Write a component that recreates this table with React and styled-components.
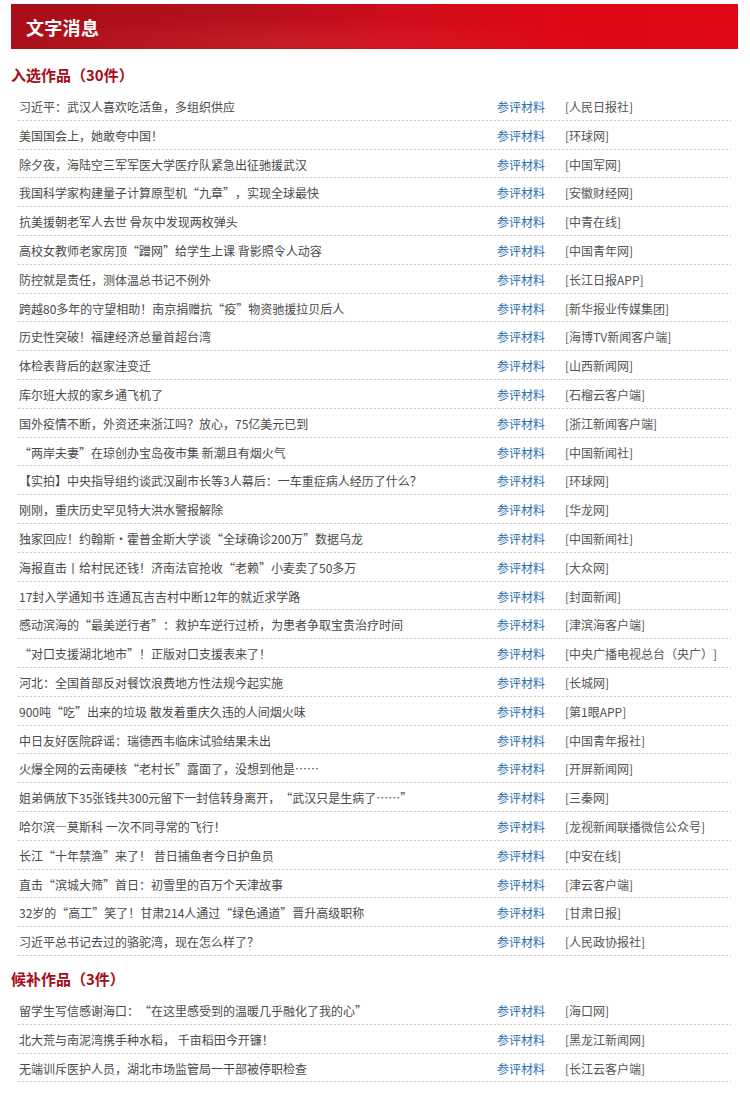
import React from "react"
import styled, { createGlobalStyle } from "styled-components"

const selected = [
  ["习近平：武汉人喜欢吃活鱼，多组织供应", "人民日报社"],
  ["美国国会上，她敢夸中国！", "环球网"],
  ["除夕夜，海陆空三军军医大学医疗队紧急出征驰援武汉", "中国军网"],
  ["我国科学家构建量子计算原型机“九章”，实现全球最快", "安徽财经网"],
  ["抗美援朝老军人去世 骨灰中发现两枚弹头", "中青在线"],
  ["高校女教师老家房顶“蹭网”给学生上课 背影照令人动容", "中国青年网"],
  ["防控就是责任，测体温总书记不例外", "长江日报APP"],
  ["跨越80多年的守望相助！南京捐赠抗“疫”物资驰援拉贝后人", "新华报业传媒集团"],
  ["历史性突破！福建经济总量首超台湾", "海博TV新闻客户端"],
  ["体检表背后的赵家洼变迁", "山西新闻网"],
  ["库尔班大叔的家乡通飞机了", "石榴云客户端"],
  ["国外疫情不断，外资还来浙江吗？放心，75亿美元已到", "浙江新闻客户端"],
  ["“两岸夫妻”在琼创办宝岛夜市集 新潮且有烟火气", "中国新闻社"],
  ["【实拍】中央指导组约谈武汉副市长等3人幕后：一车重症病人经历了什么？", "环球网"],
  ["刚刚，重庆历史罕见特大洪水警报解除", "华龙网"],
  ["独家回应！约翰斯·霍普金斯大学谈“全球确诊200万”数据乌龙", "中国新闻社"],
  ["海报直击丨给村民还钱！济南法官抢收“老赖”小麦卖了50多万", "大众网"],
  ["17封入学通知书 连通瓦吉吉村中断12年的就近求学路", "封面新闻"],
  ["感动滨海的“最美逆行者”：救护车逆行过桥，为患者争取宝贵治疗时间", "津滨海客户端"],
  ["“对口支援湖北地市”！正版对口支援表来了！", "中央广播电视总台（央广）"],
  ["河北：全国首部反对餐饮浪费地方性法规今起实施", "长城网"],
  ["900吨“吃”出来的垃圾 散发着重庆久违的人间烟火味", "第1眼APP"],
  ["中日友好医院辟谣：瑞德西韦临床试验结果未出", "中国青年报社"],
  ["火爆全网的云南硬核“老村长”露面了，没想到他是……", "开屏新闻网"],
  ["姐弟俩放下35张钱共300元留下一封信转身离开，“武汉只是生病了……”", "三秦网"],
  ["哈尔滨—莫斯科 一次不同寻常的飞行！", "龙视新闻联播微信公众号"],
  ["长江“十年禁渔”来了！ 昔日捕鱼者今日护鱼员", "中安在线"],
  ["直击“滨城大筛”首日：初雪里的百万个天津故事", "津云客户端"],
  ["32岁的“高工”笑了！甘肃214人通过“绿色通道”晋升高级职称", "甘肃日报"],
  ["习近平总书记去过的骆驼湾，现在怎么样了？", "人民政协报社"],
]

const alternates = [
  ["留学生写信感谢海口：“在这里感受到的温暖几乎融化了我的心”", "海口网"],
  ["北大荒与南泥湾携手种水稻， 千亩稻田今开镰！", "黑龙江新闻网"],
  ["无端训斥医护人员，湖北市场监管局一干部被停职检查", "长江云客户端"],
]

const GlobalStyle = createGlobalStyle`
  html, body {
    margin: 0;
    padding: 0;
    background: #fff;
  }
  body {
    font-family: "Noto Sans CJK SC", "Liberation Sans", sans-serif;
    text-spacing-trim: space-all;
  }
`

const Page = styled.div`
  width: 750px;
  padding: 4px 12px 0 11px;
  box-sizing: border-box;
`

const Banner = styled.div`
  height: 45px;
  display: flex;
  align-items: center;
  padding-left: 15px;
  background:
    radial-gradient(ellipse 60% 80% at 38% 85%, rgba(255, 90, 90, 0.18), transparent 70%),
    linear-gradient(90deg, #a90e18 0%, #b3101b 30%, #d00c1a 55%, #de0716 75%, #e00615 100%);
  color: #fff;
  font-size: 18px;
  font-weight: 700;
  letter-spacing: 0.3px;
`

const Section = styled.section`
  margin-top: ${p => p.gap}px;
`

const Heading = styled.h2`
  margin: 0 0 6px;
  font-size: 15px;
  line-height: 22px;
  font-weight: 700;
  color: #a50c16;
`

const List = styled.ul`
  list-style: none;
  margin: 0 0 0 7px;
  padding: 0;
  width: 713px;
`

const Row = styled.li`
  display: grid;
  grid-template-columns: 478px 68px 1fr;
  height: 28.8px;
  box-sizing: border-box;
  padding: 6px 0 0 1px;
  background: repeating-linear-gradient(90deg, #c9c9c9 0 2px, transparent 2px 4px) left bottom / 100% 1px no-repeat;
  font-size: 12px;
  line-height: 18px;
  white-space: nowrap;
`

const Title = styled.span`
  color: #4a4a4a;
  overflow: hidden;
`

const Material = styled.a`
  color: #2b6db3;
  text-decoration: none;
  cursor: pointer;
`

const Source = styled.span`
  color: #555;
`

function Group({ title, items, gap }) {
  return (
    <Section gap={gap}>
      <Heading>{title}</Heading>
      <List>
        {items.map(([t, s]) => (
          <Row key={t}>
            <Title>{t}</Title>
            <Material>参评材料</Material>
            <Source>[{s}]</Source>
          </Row>
        ))}
      </List>
    </Section>
  )
}

export default function App() {
  return (
    <Page lang="zh-CN">
      <GlobalStyle />
      <Banner>文字消息</Banner>
      <Group title="入选作品（30件）" items={selected} gap={15} />
      <Group title="候补作品（3件）" items={alternates} gap={12} />
    </Page>
  )
}
